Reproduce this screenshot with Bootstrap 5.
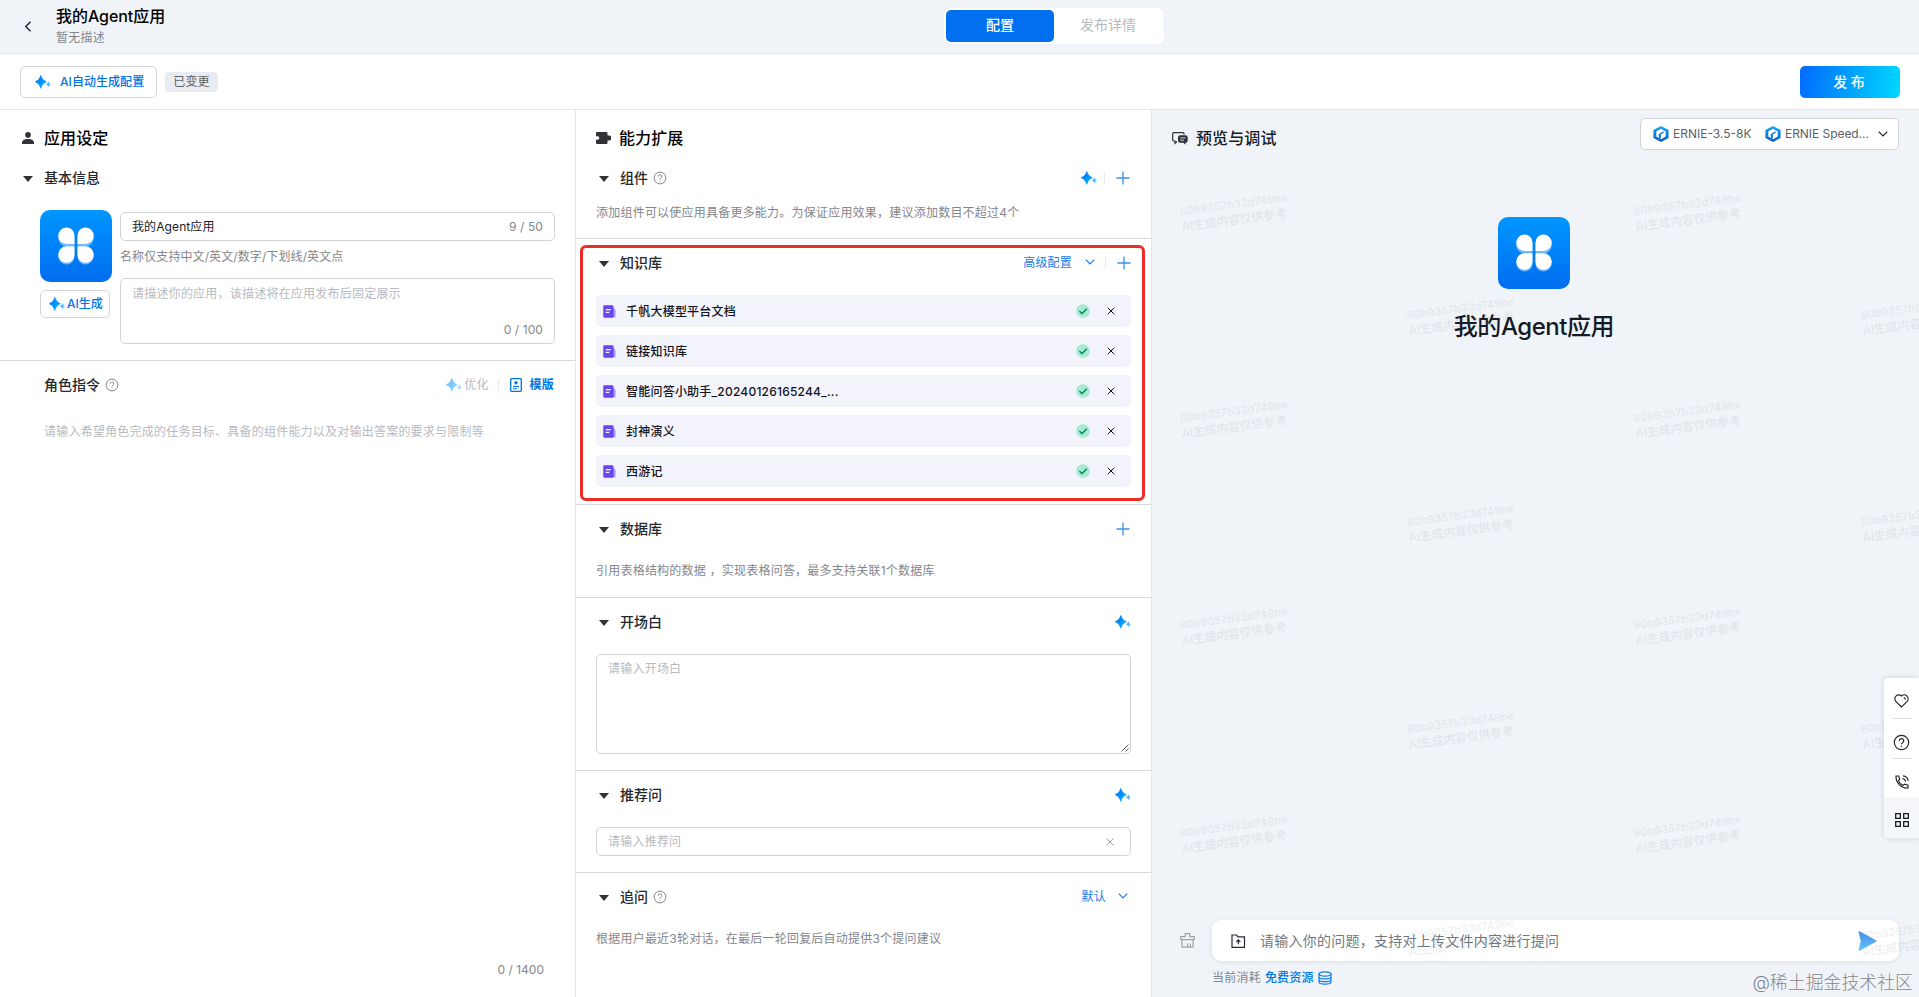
<!DOCTYPE html>
<html lang="zh-CN">
<head>
<meta charset="utf-8">
<meta name="viewport" content="width=device-width, initial-scale=1">
<title>我的Agent应用</title>
<link href="https://cdn.jsdelivr.net/npm/bootstrap@5.3.0/dist/css/bootstrap.min.css" rel="stylesheet">
<style>
  body { font-family: Inter, "Noto Sans CJK SC", sans-serif; font-size: 12px; line-height: 20px; letter-spacing: .22px; color: #151b26; height: 997px; overflow: hidden; background: #fff; }
  svg { flex: none; display: block; }
  .topbar { height: 54px; background: #f0f4f8; border-bottom: 1px solid #e4e7eb; display: grid; grid-template-columns: 944px 220px 1fr; }
  .title-lg { font-size: 16px; line-height: 20px; font-weight: 500; letter-spacing: -.05px; color: #000; margin-top: 2px; }
  .subtitle { padding-top: 2px; }
  .muted { color: #84868c; }
  .faint { color: #b8babf; }
  .tabs { height: 36px; margin-top: 8px; background: #fff; border-radius: 6px; padding: 2px; font-size: 14px; letter-spacing: 0; box-shadow: 0 0 2px rgba(0,0,0,.06); }
  .tabs > div { display: flex; align-items: center; justify-content: center; padding-bottom: 2px; }
  .tab-on { width: 108px; background: #0070f0; color: #fff; border-radius: 5px; font-weight: 500; }
  .toolbar { height: 56px; border-bottom: 1px solid #e4e6ea; padding: 0 19px 0 20px; }
  .line-btn { border: 1px solid #d4d6d9; border-radius: 5px; color: #0073e6; font-weight: 500; background: #fff; display: flex; align-items: center; }
  .gen-btn { width: 137px; height: 32px; padding-left: 14px; gap: 9px; letter-spacing: .05px; }
  .ai-btn { width: 70px; height: 28px; margin-top: 8px; padding-left: 8px; gap: 2px; letter-spacing: 0; }
  .state { width: 53px; height: 20px; border-radius: 4px; background: #e8ecf0; color: #5c5f66; text-align: center; }
  .publish { width: 100px; height: 32px; border-radius: 5px; background: linear-gradient(100deg,#006aff,#00d9ff); color: #fff; font-size: 14px; letter-spacing: 0; font-weight: 500; display: flex; align-items: center; justify-content: center; padding-right: 2px; }
  .main { height: 887px; display: grid; grid-template-columns: 576px 576px 767px; }
  .pane { border-right: 1px solid #e4e6ea; min-width: 0; }
  .pane-title { height: 56px; display: flex; align-items: center; font-size: 16px; font-weight: 500; letter-spacing: .1px; color: #000; }
  .sec { border-bottom: 1px solid #d7d9dd; padding: 0 20px; }
  .sec-title { height: 24px; display: flex; align-items: center; font-size: 14px; font-weight: 500; letter-spacing: 0; color: #25282e; }
  .head-pad { padding-top: 12px; }
  .tri { width: 0; height: 0; border: 5px solid transparent; border-top: 6px solid #303238; border-bottom: 0; margin: 2px 11px 0 3px; }
  .act { font-size: 12px; letter-spacing: .2px; font-weight: 400; color: #1a7ae8; }
  .vsep { width: 1px; height: 12px; background: #e8e9eb; }
  .box { border: 1px solid #d0d2d6; border-radius: 5px; background: #fff; }
  .kb { position: relative; height: 266px; padding-top: 12px; }
  .kb-mark { position: absolute; left: 4px; top: 6px; width: 565px; height: 256px; border: 3px solid #ea2d25; border-radius: 6px; pointer-events: none; }
  .kb-item { height: 32px; border-radius: 5px; background: #f3f3fb; padding: 0 13px 0 7px; color: #10141c; font-weight: 500; display: flex; align-items: center; margin-bottom: 8px; }
  .kb-item span { margin-left: 10px; padding-top: 1px; }
  .preview { background: #f0f4f8; position: relative; }
  .models { position: absolute; right: 20px; top: 8px; width: 259px; height: 32px; padding: 0 10px 0 12px; display: flex; align-items: center; color: #5c5f66; letter-spacing: 0; }
  .hero { font-size: 24px; line-height: 32px; font-weight: 500; letter-spacing: -.45px; margin-top: 22px; }
  .ask { width: 687px; height: 41px; border-radius: 9px; background: #fff; box-shadow: 0 1px 4px rgba(20,40,80,.1); display: flex; align-items: center; font-size: 14px; letter-spacing: .25px; color: #747980; padding-left: 19px; padding-right: 22px; }
  .wm { position: absolute; width: 110px; color: rgba(70,80,90,.09); font-size: 11px; line-height: 15px; font-weight: 600; letter-spacing: -.05px; transform: rotate(-7.5deg); white-space: nowrap; }
  .wm span { font-size: 12px; letter-spacing: -.2px; }
  .wm-layer { position: absolute; inset: 0; overflow: hidden; pointer-events: none; }
  .dock { position: absolute; right: 0; top: 568px; width: 35px; height: 160px; background: #fff; border-radius: 4px 0 0 4px; box-shadow: 0 0 6px rgba(0,0,0,.14); overflow: hidden; }
  .dock > div { height: 40px; display: flex; align-items: center; justify-content: center; position: relative; }
  .dock .ruled::after { content: ""; position: absolute; left: 8px; right: 7px; bottom: 0; border-bottom: 1px solid #dcdee1; }
  .credit { position: absolute; right: 6px; bottom: 1px; font-size: 17.900px; line-height: 26px; font-weight: 300; letter-spacing: 0; color: #7f858c; text-shadow: 0 0 1px #fff; }
</style>
</head>
<body>
<svg width="0" height="0" class="position-absolute">
  <defs>
    <linearGradient id="gs" x1="0" y1="0" x2="1" y2="1"><stop offset="0" stop-color="#0065f5"/><stop offset="1" stop-color="#00c0ff"/></linearGradient>
    <linearGradient id="gi" x1="0" y1="0" x2="0" y2="1"><stop offset="0" stop-color="#0096ff"/><stop offset="1" stop-color="#006df0"/></linearGradient>
    <linearGradient id="gh" x1="0" y1="0" x2="0" y2="1"><stop offset="0" stop-color="#18a8f5"/><stop offset="1" stop-color="#0759c4"/></linearGradient>
    <linearGradient id="gp" x1="0" y1="0" x2="0" y2="1"><stop offset="0" stop-color="#4a90ea"/><stop offset="1" stop-color="#60c4ff"/></linearGradient>
    <symbol id="spark" viewBox="0 0 16 14"><path fill="url(#gs)" stroke="url(#gs)" stroke-width=".8" stroke-linejoin="round" d="M5.800.500C6.900 3.800 8 5.200 11.300 6.700 8 8.300 6.900 9.800 5.800 13.300 4.700 9.800 3.600 8.300.300 6.700 3.600 5.200 4.700 3.800 5.800.500Z"/><path fill="#5cb4ff" d="M13.400 6c.5 1.800 1 2.500 2.600 3.200-1.600.7-2.100 1.500-2.600 3.300-.5-1.800-1-2.600-2.600-3.300 1.600-.7 2.100-1.400 2.600-3.200Z"/></symbol>
    <symbol id="help" viewBox="0 0 14 14"><circle cx="7" cy="7" r="5.900" fill="none" stroke="currentColor"/><path d="M5.200 5.700a1.800 1.800 0 1 1 2.700 1.500c-.6.400-.9.700-.9 1.300" fill="none" stroke="currentColor"/><circle cx="7" cy="10" r=".6" fill="currentColor"/></symbol>
    <symbol id="plus" viewBox="0 0 14 14"><path d="M7 .5v13M.5 7h13" stroke="#3a90ea" stroke-width="1.300"/></symbol>
    <symbol id="down" viewBox="0 0 10 6"><path d="M.8.700 5 5 9.200.7" fill="none" stroke="currentColor" stroke-width="1.200"/></symbol>
    <symbol id="cross" viewBox="0 0 8 8"><path d="m.7.700 6.600 6.600M7.300.700.700 7.300" stroke="currentColor" stroke-width="1"/></symbol>
    <symbol id="clover" viewBox="0 0 72 72"><rect width="72" height="72" rx="10" fill="url(#gi)"/><g fill="#6fb9ff"><path d="M26.500 20a8 8 0 0 1 8 8v8.500h-8a8 8 0 0 1 0-16.500ZM45.500 20a8 8 0 0 0-8 8v8.500h8a8 8 0 0 0 0-16.500ZM26.500 54.500a8 8 0 0 0 8-8V38h-8a8 8 0 0 0 0 16.500ZM45.500 54.500a8 8 0 0 1-8-8V38h8a8 8 0 0 1 0 16.500Z"/></g><g fill="#fff"><path d="M26.500 17.500a8 8 0 0 1 8 8V34h-8a8.200 8.200 0 0 1 0-16.500ZM45.500 17.500a8 8 0 0 0-8 8V34h8a8.200 8.200 0 0 0 0-16.500ZM26.500 52.800a8 8 0 0 0 8-8v-8.500h-8a8.200 8.200 0 0 0 0 16.500ZM45.500 52.800a8 8 0 0 1-8-8v-8.500h8a8.200 8.200 0 0 1 0 16.500Z"/></g></symbol>
    <symbol id="doc" viewBox="0 0 13 13"><path d="M9 2.500h1.500L12.500 5v6.500a1 1 0 0 1-1 1H9Z" fill="#a697ff"/><rect x=".3" y=".3" width="10.200" height="12.400" rx="1.300" fill="#6746eb"/><path d="M2.800 4.600h5M2.800 7.400h3.500" stroke="#fff" stroke-width="1.100"/></symbol>
    <symbol id="ok" viewBox="0 0 14 14"><circle cx="7" cy="7" r="6.800" fill="#a5ecd3"/><path d="m3.400 7 2.600 2.600 4.800-4.900" fill="none" stroke="#128a66" stroke-width="1.500"/></symbol>
    <symbol id="hex" viewBox="0 0 16 16"><path d="M8 0 15.600 4.100v7.800L8 16 .4 11.900V4.100Z" fill="url(#gh)"/><path d="m8 2.800 4.700 2.600v5.200L8 13.200l-4.700-2.600V5.400Z" fill="#fff"/><path d="M5.800 12V8l4.400-2.400 1 .6L7.700 8.500V13Z" fill="#0b68cf"/></symbol>
  </defs>
</svg>

<header class="topbar">
  <div class="d-flex">
    <svg class="ms-4" style="margin-top:21px" width="8" height="11" viewBox="0 0 8 11"><path d="M6.500.800 1.800 5.500l4.700 4.700" fill="none" stroke="#151b26" stroke-width="1.300"/></svg>
    <div class="ms-4 pt-1"><div class="title-lg">我的Agent应用</div><div class="muted subtitle">暂无描述</div></div>
  </div>
  <div class="tabs d-flex"><div class="tab-on">配置</div><div class="flex-fill faint">发布详情</div></div>
</header>

<div class="toolbar d-flex align-items-center">
  <div class="line-btn gen-btn"><svg width="16" height="14"><use href="#spark"/></svg><span>AI自动生成配置</span></div>
  <div class="state ms-2">已变更</div>
  <div class="publish ms-auto">发&nbsp;布</div>
</div>

<div class="main">
  <section class="pane d-flex flex-column">
    <div class="sec" style="height:251px">
      <div class="pane-title"><svg style="margin:0 10px 0 2px" width="12" height="12" viewBox="0 0 12 12" fill="#303238"><circle cx="6" cy="2.900" r="2.800"/><path d="M0 12v-1.200C0 8.300 2.500 7 6 7s6 1.300 6 3.800V12Z"/></svg>应用设定</div>
      <div class="sec-title"><i class="tri"></i>基本信息</div>
      <div class="d-flex" style="margin:20px 0 0 20px">
        <div style="width:80px">
          <svg width="72" height="72"><use href="#clover"/></svg>
          <div class="line-btn ai-btn"><svg width="16" height="14"><use href="#spark"/></svg>AI生成</div>
        </div>
        <div class="flex-fill" style="margin-top:2px">
          <div class="box d-flex justify-content-between align-items-center" style="height:29px;padding:0 11px"><span style="letter-spacing:.1px">我的Agent应用</span><span class="muted" style="letter-spacing:.1px">9 / 50</span></div>
          <div class="muted" style="margin-top:6px;height:31px;letter-spacing:.1px">名称仅支持中文/英文/数字/下划线/英文点</div>
          <div class="box d-flex flex-column justify-content-between" style="height:66px;padding:5px 11px 3px"><div class="faint">请描述你的应用，该描述将在应用发布后固定展示</div><div class="muted text-end" style="letter-spacing:.1px">0 / 100</div></div>
        </div>
      </div>
    </div>
    <div class="d-flex flex-column flex-fill" style="padding:12px 21px 17px 44px">
      <div class="sec-title">角色指令<svg class="muted" style="margin-left:5px" width="14" height="14"><use href="#help"/></svg>
        <div class="act d-flex align-items-center ms-auto"><svg width="16" height="14" opacity=".5"><use href="#spark"/></svg><span class="faint" style="margin-left:2px">优化</span><i class="vsep" style="margin:0 11px 0 9px"></i>
          <svg width="12" height="14" viewBox="0 0 12 14"><rect x=".7" y=".7" width="10.600" height="12.600" rx=".8" fill="none" stroke="#0073e6" stroke-width="1.300"/><path d="m6 2.600.8 1.200 1.400.3-1 1.100.2 1.500L6 6.100l-1.400.6.2-1.500-1-1.100 1.400-.3Z" fill="#0073e6"/><path d="M3 8.500h6M3 10.700h4" stroke="#0073e6"/></svg><span class="fw-bold" style="margin-left:8px;color:#0073e6">模版</span></div>
      </div>
      <div class="faint" style="margin-top:25px">请输入希望角色完成的任务目标、具备的组件能力以及对输出答案的要求与限制等</div>
      <div class="muted mt-auto text-end" style="padding-right:10px;letter-spacing:0">0 / 1400</div>
    </div>
  </section>

  <section class="pane">
    <div class="sec" style="height:129px">
      <div class="pane-title"><svg style="margin-right:8px" width="15" height="12" viewBox="0 0 15 12"><path d="M1 0h9.500a1 1 0 0 1 1 1v2.500H13A1.700 1.700 0 0 1 13 8.500h-1.500V11a1 1 0 0 1-1 1H1a1 1 0 0 1-1-1V7.800h1.500a1.800 1.800 0 0 0 0-3.600H0V1a1 1 0 0 1 1-1Z" fill="#303238"/></svg>能力扩展</div>
      <div class="sec-title"><i class="tri"></i>组件<svg class="muted" style="margin-left:5px" width="14" height="14"><use href="#help"/></svg><div class="act d-flex align-items-center ms-auto"><svg width="16" height="14"><use href="#spark"/></svg><i class="vsep" style="margin:0 11px 0 7px"></i><svg width="14" height="14" style="margin-right:1px"><use href="#plus"/></svg></div></div>
      <div class="muted" style="margin-top:13px">添加组件可以使应用具备更多能力。为保证应用效果，建议添加数目不超过4个</div>
    </div>
    <div class="sec kb">
      <div class="kb-mark"></div>
      <div class="sec-title" style="margin-bottom:20px"><i class="tri"></i>知识库<div class="act d-flex align-items-center ms-auto">高级配置<svg style="margin:0 10px 2px 13px" width="10" height="6"><use href="#down"/></svg><i class="vsep" style="margin-right:11px"></i><svg width="14" height="14"><use href="#plus"/></svg></div></div>
      <div class="kb-item"><svg width="13" height="13"><use href="#doc"/></svg><span>千帆大模型平台文档</span><svg class="ms-auto" width="14" height="14"><use href="#ok"/></svg><svg style="margin:0 3px 0 17px" width="8" height="8"><use href="#cross"/></svg></div>
      <div class="kb-item"><svg width="13" height="13"><use href="#doc"/></svg><span>链接知识库</span><svg class="ms-auto" width="14" height="14"><use href="#ok"/></svg><svg style="margin:0 3px 0 17px" width="8" height="8"><use href="#cross"/></svg></div>
      <div class="kb-item"><svg width="13" height="13"><use href="#doc"/></svg><span>智能问答小助手_20240126165244_...</span><svg class="ms-auto" width="14" height="14"><use href="#ok"/></svg><svg style="margin:0 3px 0 17px" width="8" height="8"><use href="#cross"/></svg></div>
      <div class="kb-item"><svg width="13" height="13"><use href="#doc"/></svg><span>封神演义</span><svg class="ms-auto" width="14" height="14"><use href="#ok"/></svg><svg style="margin:0 3px 0 17px" width="8" height="8"><use href="#cross"/></svg></div>
      <div class="kb-item"><svg width="13" height="13"><use href="#doc"/></svg><span>西游记</span><svg class="ms-auto" width="14" height="14"><use href="#ok"/></svg><svg style="margin:0 3px 0 17px" width="8" height="8"><use href="#cross"/></svg></div>
    </div>
    <div class="sec head-pad" style="height:93px">
      <div class="sec-title"><i class="tri"></i>数据库<svg class="ms-auto" style="margin-right:1px" width="14" height="14"><use href="#plus"/></svg></div>
      <div class="muted" style="margin-top:20px">引用表格结构的数据 ，实现表格问答，最多支持关联1个数据库</div>
    </div>
    <div class="sec head-pad" style="height:173px">
      <div class="sec-title"><i class="tri"></i>开场白<svg class="ms-auto" width="16" height="14"><use href="#spark"/></svg></div>
      <div class="box faint d-flex justify-content-between" style="height:100px;margin-top:20px;padding:4px 1px 1px 11px"><span>请输入开场白</span><svg class="align-self-end" width="8" height="8" viewBox="0 0 8 8"><path d="M.5 7.500l7-7M4.500 7.500l3-3" stroke="#555"/></svg></div>
    </div>
    <div class="sec head-pad" style="height:102px">
      <div class="sec-title"><i class="tri"></i>推荐问<svg class="ms-auto" width="16" height="14"><use href="#spark"/></svg></div>
      <div class="box faint d-flex align-items-center justify-content-between" style="height:29px;margin-top:20px;padding:0 16px 0 11px"><span>请输入推荐问</span><svg width="8" height="8" style="color:#9a9ca1"><use href="#cross"/></svg></div>
    </div>
    <div class="sec border-0 head-pad">
      <div class="sec-title"><i class="tri"></i>追问<svg class="muted" style="margin-left:5px" width="14" height="14"><use href="#help"/></svg><div class="act d-flex align-items-center ms-auto">默认<svg style="margin:0 3px 2px 12px" width="10" height="6"><use href="#down"/></svg></div></div>
      <div class="muted" style="margin-top:20px">根据用户最近3轮对话，在最后一轮回复后自动提供3个提问建议</div>
    </div>
  </section>

  <section class="preview d-flex flex-column align-items-center">
    <div class="pane-title w-100" style="padding-left:20px;color:#151b26"><svg style="margin-right:8px" width="16" height="13" viewBox="0 0 16 13"><path d="M12 2.600V1.700a1 1 0 0 0-1-1H1.700a1 1 0 0 0-1 1V8a1 1 0 0 0 1 1H3v2.300L5 9.500" fill="none" stroke="#303238" stroke-width="1.200"/><path d="M8.200 3.200h5.300a2.200 2.200 0 0 1 2.200 2.200v3.200a2.200 2.200 0 0 1-2.200 2.200v2L11.200 10.800h-3A2.200 2.200 0 0 1 6 8.600V5.400a2.200 2.200 0 0 1 2.200-2.200Z" fill="#303238"/><path d="M8.200 5.900h5.300M8.200 8.200h3.800" stroke="#dfe3e8" stroke-width=".9"/></svg>预览与调试</div>
    <div class="models box"><svg width="16" height="16"><use href="#hex"/></svg><span style="margin-left:4px;width:92px">ERNIE-3.5-8K</span><svg width="16" height="16"><use href="#hex"/></svg><span style="margin-left:4px;letter-spacing:-.05px">ERNIE Speed...</span><svg class="ms-auto" width="10" height="6" style="color:#151b26"><use href="#down"/></svg></div>
    <div class="d-flex flex-column align-items-center" style="margin:51px 3px 0 0">
      <svg width="72" height="72"><use href="#clover"/></svg>
      <div class="hero">我的Agent应用</div>
    </div>
    <div class="mt-auto w-100" style="padding:0 20px 9px 28px">
      <div class="d-flex align-items-center justify-content-between">
        <svg width="15" height="15" viewBox="0 0 15 15" fill="none" stroke="#9fa3a8" stroke-width="1.200"><path d="M.7 6.700V3.700h4.500V.700h4.500v3h4.600v3ZM2 6.700v7.500h11V6.700M7.500 10.500v3.500M10.300 10.500v3.500"/></svg>
        <div class="ask"><svg width="15" height="14" viewBox="0 0 15 14" fill="none" stroke="#25282e" stroke-width="1.200"><path d="M1 1h4.500L7 2.800h6.500v10.500H1ZM7.300 10.300V6M5.300 7.800l2-2 2 2"/></svg><span style="margin-left:14px">请输入你的问题，支持对上传文件内容进行提问</span><svg class="ms-auto" width="19" height="20" viewBox="0 0 19 20"><path d="M.5 1.200C.5.300 1.300 0 2 .400L18 9.200c.8.500.8 1.100 0 1.600L2 19.600c-.7.400-1.500 0-1.400-.8L2.800 10Z" fill="url(#gp)"/></svg></div>
      </div>
      <div class="d-flex align-items-center muted" style="margin:7px 0 0 32px">当前消耗<span style="margin:0 4px;color:#0073e6;font-weight:500">免费资源</span><svg width="14" height="14" viewBox="0 0 14 14" fill="none" stroke="#0f7ae8" stroke-width="1.200"><ellipse cx="7" cy="3" rx="6" ry="2.200"/><path d="M1 3v8c0 1.200 2.700 2.200 6 2.200s6-1 6-2.200V3M1 5.700c0 1.200 2.700 2.200 6 2.200s6-1 6-2.200M1 8.400c0 1.200 2.700 2.200 6 2.200s6-1 6-2.200"/></svg></div>
    </div>
    <div class="wm-layer" id="marks"></div>
    <div class="dock">
      <div class="ruled" style="height:41px;padding-top:4px"><svg width="15" height="14" viewBox="0 0 15 14" fill="none" stroke="#25282e" stroke-width="1.200"><path d="M7.500 13 2 7.600A3.700 3.700 0 0 1 7.500 2 3.700 3.700 0 0 1 13 7.600ZM9.800 3.800c1 0 1.600.6 1.600 1.600"/></svg></div>
      <div class="ruled" style="padding-top:6px"><svg width="17" height="17" viewBox="0 0 14 14" style="color:#25282e"><use href="#help"/></svg></div>
      <div style="height:39px;padding-top:6px"><svg width="14" height="14" viewBox="0 0 14 14" fill="none" stroke="#25282e" stroke-width="1.200"><path d="M1 1h2.700l1 3.300L3.400 5.600c.8 2.200 2.300 3.800 4.600 4.900l1.500-1.300 3.500 1V13C6.500 13.500.700 8 1 1ZM7.500 3.500c1.600.2 2.700 1.300 3 3M8 .9c2.900.300 4.800 2.200 5.200 5"/></svg></div>
      <div style="background:#f5f6f9;padding-top:3px"><svg width="14" height="14" viewBox="0 0 14 14" fill="none" stroke="#151b26" stroke-width="1.300"><path d="M.7.700h4.600v4.600H.7ZM8.700.700h4.600v4.600H8.700ZM.7 8.700h4.600v4.600H.7ZM8.700 8.700h4.600v4.600H8.700Z"/></svg></div>
    </div>
    <div class="credit">@稀土掘金技术社区</div>
  </section>
</div>

<script src="https://cdn.jsdelivr.net/npm/bootstrap@5.3.0/dist/js/bootstrap.bundle.min.js"></script>
<script>
  // Tiled page watermark: alternate rows are shifted by half a tile.
  const layer = document.getElementById('marks');
  for (let row = 0; row < 8; row++) {
    for (let col = 0; col < 2; col++) {
      const el = document.createElement('div');
      el.className = 'wm';
      el.innerHTML = '80b9357b33d749be<br><span>AI生成内容仅供参考</span>';
      el.style.left = (28 + col * 453.5 + (row % 2) * 227) + 'px';
      el.style.top = (87 + row * 103.6) + 'px';
      layer.appendChild(el);
    }
  }
</script>
</body>
</html>
